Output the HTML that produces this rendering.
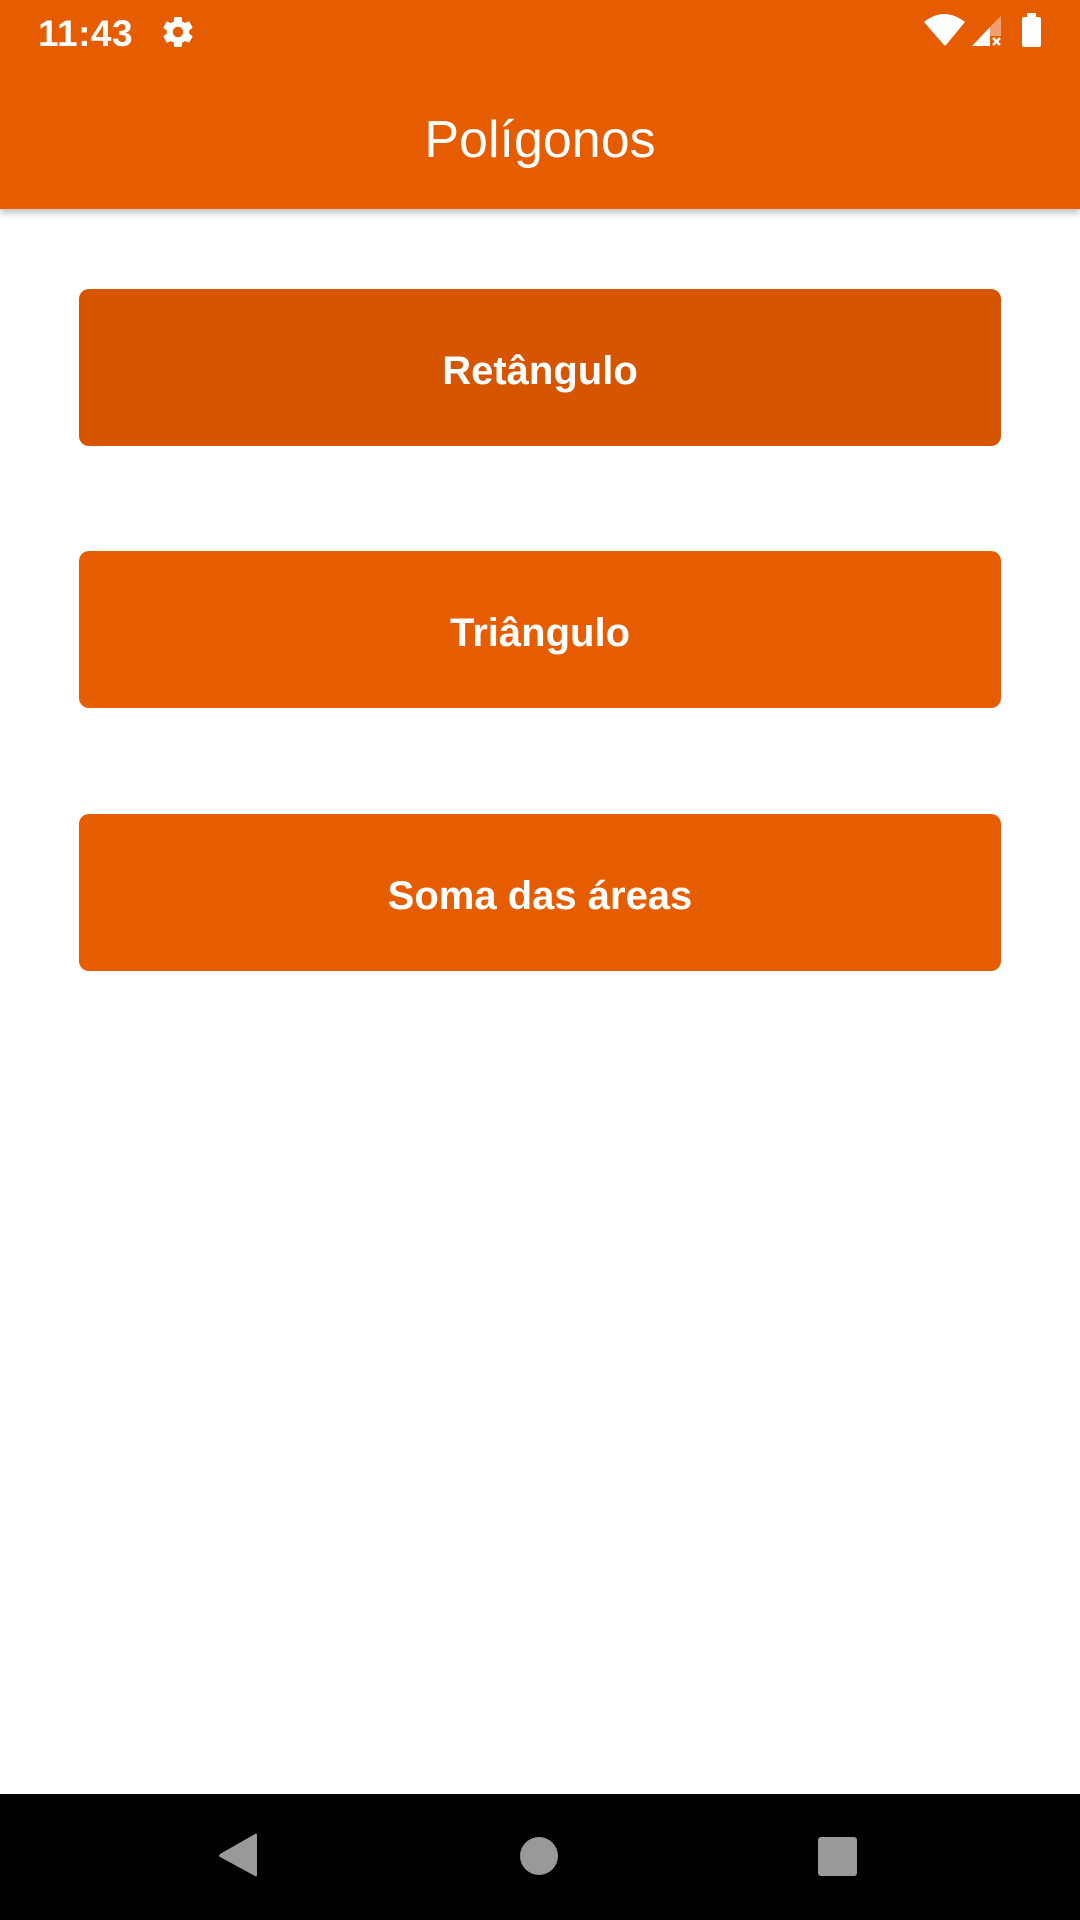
<!DOCTYPE html>
<html><head><meta charset="utf-8"><style>
html,body{margin:0;padding:0;width:1080px;height:1920px;overflow:hidden;background:#fff;font-family:"Liberation Sans",Roboto,sans-serif;position:relative}
.bar{position:absolute;left:0;top:0;width:1080px;height:209px;background:#E65C00;box-shadow:0 3px 8px rgba(0,0,0,.3)}
.time{position:absolute;left:38px;top:12px;color:#fff;font-size:37px;line-height:44px;font-weight:bold;letter-spacing:0.5px}
.title{position:absolute;left:0;width:1080px;top:108px;text-align:center;color:#fff;font-size:52px;line-height:64px}
.btn{position:absolute;left:79px;width:922px;height:157px;background:#E65C00;border-radius:10px;color:#fff;font-weight:bold;font-size:40px;display:flex;align-items:center;justify-content:center;box-sizing:border-box;padding-top:8px}
.nav{position:absolute;left:0;top:1794px;width:1080px;height:126px;background:#000}
</style></head><body>
<div class="bar">
<div class="time">11:43</div>
<svg style="position:absolute;left:160px;top:14px" width="36" height="36" viewBox="0 0 24 24"><path fill="#fff" d="M19.4 13c.04-.33.06-.66.06-1s-.02-.67-.06-1l2.1-1.65c.2-.15.24-.42.12-.64l-2-3.460c-.12-.22-.39-.3-.61-.22l-2.490 1c-.52-.4-1.08-.73-1.69-.98l-.38-2.65A.49.49 0 0 0 14 2h-4c-.25 0-.46.18-.49.42l-.38 2.65c-.61.25-1.17.59-1.69.98l-2.49-1c-.23-.09-.49 0-.61.22l-2 3.46c-.13.22-.07.49.12.64L4.57 11c-.04.33-.07.67-.07 1s.03.67.07 1l-2.11 1.65c-.19.15-.24.42-.12.64l2 3.46c.12.22.39.3.61.22l2.49-1c.52.4 1.08.73 1.69.98l.38 2.65c.03.24.24.42.49.42h4c.25 0 .46-.18.49-.42l.38-2.650c.61-.25 1.17-.59 1.69-.98l2.49 1c.23.09.49 0 .61-.22l2-3.46c.12-.22.07-.49-.12-.64L19.4 13zM12 15.5a3.5 3.5 0 1 1 0-7 3.5 3.5 0 0 1 0 7z"/></svg>
<svg style="position:absolute;left:900px;top:0" width="180" height="63" viewBox="0 0 180 63">
<path fill="#fff" d="M24 22 Q44 6 65 22 L46 45 Q45 46 44 45 Z"/>
<path fill="#fff" d="M72 46 L90 27 L90 46 Z"/>
<path fill="#F0A070" d="M90 27 L101 16 L101 36 L90 36 Z"/>
<path stroke="#fff" stroke-width="2.5" d="M93 38 L100 45 M100 38 L93 45"/>
<rect x="122" y="17" width="19" height="30" rx="2" fill="#fff"/>
<rect x="127" y="13" width="9" height="5" fill="#fff"/>
</svg>
<div class="title">Polígonos</div>
</div>
<div class="btn" style="top:289px;background:#D55500">Retângulo</div>
<div class="btn" style="top:551px">Triângulo</div>
<div class="btn" style="top:814px">Soma das áreas</div>
<div class="nav">
<svg width="1080" height="126" viewBox="0 0 1080 126">
<path fill="#999" d="M255 40 Q257 38 257 42 L257 80 Q257 84 255 82 L220 63 Q218 62 220 60 Z"/>
<circle cx="539" cy="62" r="19" fill="#999"/>
<rect x="818" y="43" width="39" height="39" rx="3" fill="#999"/>
</svg>
</div>
</body></html>
